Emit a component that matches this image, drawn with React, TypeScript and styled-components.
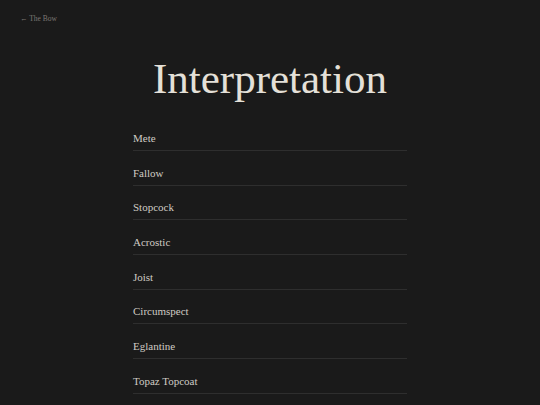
import React from "react";
import styled, { createGlobalStyle } from "styled-components";

const GlobalStyle = createGlobalStyle`
  html, body {
    margin: 0;
    padding: 0;
    background: #1a1a1a;
  }
  body {
    font-family: "Liberation Serif", "DejaVu Serif", serif;
  }
`;

const Page = styled.div`
  min-height: 405px;
  background: #1a1a1a;
  padding: 14px 20px 0;
  box-sizing: border-box;
`;

const BackLink = styled.a`
  display: block;
  width: max-content;
  font-size: 7.5px;
  line-height: 10px;
  color: #7a7773;
  text-decoration: none;
`;

const Content = styled.main`
  width: 274px;
  margin: 0 auto;
`;

const Title = styled.h1`
  margin: 31px 0 0;
  text-align: center;
  font-weight: 400;
  font-size: 43px;
  line-height: 48px;
  color: #e4e0d8;
`;

const List = styled.ul`
  list-style: none;
  margin: 13.2px 0 0;
  padding: 0;
`;

const Item = styled.li`
  height: 34.7px;
  box-sizing: border-box;
  display: flex;
  align-items: flex-end;
  padding-bottom: 6px;
  border-bottom: 1px solid #2e2e2e;
  font-size: 11px;
  line-height: 12px;
  color: #cfcbc4;
`;

const words = [
  "Mete",
  "Fallow",
  "Stopcock",
  "Acrostic",
  "Joist",
  "Circumspect",
  "Eglantine",
  "Topaz Topcoat",
];

const App = () => {
  return (
    <>
      <GlobalStyle />
      <Page>
        <BackLink href="#">← The Bow</BackLink>
        <Content>
          <Title>Interpretation</Title>
          <List>
            {words.map((word) => (
              <Item key={word}>{word}</Item>
            ))}
          </List>
        </Content>
      </Page>
    </>
  );
};

export default App;
